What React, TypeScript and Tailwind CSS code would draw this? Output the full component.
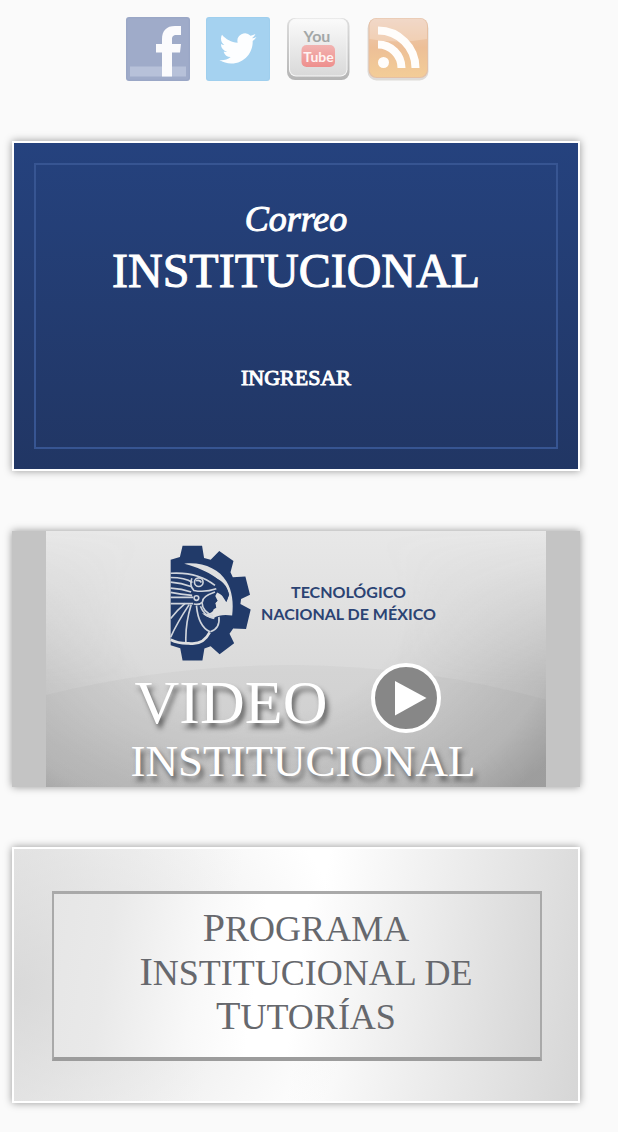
import React from "react";

function FacebookIcon() {
  return (
    <svg viewBox="0 0 64 64" className="size-16" aria-hidden="true">
      <rect width="64" height="64" rx="3" fill="#9aa7c6" />
      <rect x="1.5" y="1.5" width="61" height="61" rx="2" fill="#9fabc9" />
      <rect x="4" y="49.500" width="56" height="10" fill="#b7c1d9" />
      <path
        d="M36 59.500V35.500h-6v-8.500h6v-4.500c0-9 4.500-13.500 13-13.500h6v9h-4.500c-3.500 0-4.500 1.500-4.500 4.500v4.500h9l-1 8.500h-8v24z"
        fill="#fbfbfd"
      />
    </svg>
  );
}

function TwitterIcon() {
  return (
    <svg viewBox="0 0 64 64" className="size-16" aria-hidden="true">
      <rect width="64" height="64" rx="3" fill="#9fcfee" />
      <rect x="1" y="1" width="62" height="62" rx="3" fill="#a5d2f0" />
      <g transform="translate(13.500 13) scale(1.540)">
        <path
          fill="#fdfeff"
          d="M23.953 4.570a10 10 0 01-2.825.775 4.958 4.958 0 002.163-2.723c-.951.555-2.005.959-3.127 1.184a4.920 4.920 0 00-8.384 4.482C7.690 8.095 4.067 6.130 1.640 3.162a4.822 4.822 0 00-.666 2.475c0 1.710.870 3.213 2.188 4.096a4.904 4.904 0 01-2.228-.616v.060a4.923 4.923 0 003.946 4.827 4.996 4.996 0 01-2.212.085 4.936 4.936 0 004.604 3.417 9.867 9.867 0 01-6.102 2.105c-.390 0-.779-.023-1.170-.067a13.995 13.995 0 007.557 2.209c9.053 0 13.998-7.496 13.998-13.985 0-.210 0-.420-.015-.630A9.935 9.935 0 0024 4.590z"
        />
      </g>
    </svg>
  );
}

function YoutubeIcon() {
  return (
    <svg viewBox="0 0 64 64" className="size-16" aria-hidden="true">
      <defs>
        <linearGradient id="yt-face" x1="0" y1="0" x2="0" y2="1">
          <stop offset="0" stopColor="#fafafa" />
          <stop offset="1" stopColor="#d9d9d9" />
        </linearGradient>
        <linearGradient id="yt-edge" x1="0" y1="0" x2="0" y2="1">
          <stop offset="0" stopColor="#dedede" />
          <stop offset="1" stopColor="#b5b5b5" />
        </linearGradient>
        <linearGradient id="yt-red" x1="0" y1="0" x2="0" y2="1">
          <stop offset="0" stopColor="#f2b3b1" />
          <stop offset="1" stopColor="#ee8f8d" />
        </linearGradient>
      </defs>
      <rect x="1" y="1" width="62.500" height="62" rx="8" fill="url(#yt-edge)" />
      <rect x="3" y="1.500" width="58.500" height="58" rx="7" fill="#f7f7f7" />
      <rect x="4" y="2.500" width="56.500" height="56" rx="6" fill="url(#yt-face)" />
      <rect x="15.500" y="28" width="33.500" height="22" rx="5" fill="url(#yt-red)" />
      <text
        x="31"
        y="25"
        textAnchor="middle"
        fontSize="16"
        fontWeight="700"
        fontFamily="Lato, sans-serif"
        fill="#a3a7a7"
      >
        You
      </text>
      <text
        x="32.500"
        y="44.500"
        textAnchor="middle"
        fontSize="14"
        fontWeight="700"
        fontFamily="Lato, sans-serif"
        fill="#fff3f2"
      >
        Tube
      </text>
    </svg>
  );
}

function RssIcon() {
  return (
    <svg viewBox="0 0 64 64" className="size-16" aria-hidden="true">
      <defs>
        <linearGradient id="rss-face" x1="0" y1="0" x2="0" y2="1">
          <stop offset="0" stopColor="#edcdb9" />
          <stop offset="0.500" stopColor="#edbf97" />
          <stop offset="1" stopColor="#f3cd97" />
        </linearGradient>
      </defs>
      <rect x="1.500" y="2.500" width="61" height="61" rx="9" fill="#dedbd8" />
      <rect x="2.500" y="1" width="59.500" height="60" rx="8" fill="#e5c0a4" />
      <rect x="3.500" y="1.500" width="57.500" height="58.500" rx="7.500" fill="url(#rss-face)" />
      <path d="M3.500 22V9Q3.500 1.500 11 1.500H53.500Q61 1.500 61 9V22Q32 27 3.500 22Z" fill="#fff" opacity="0.220" />
      <circle cx="17.500" cy="45.500" r="5.500" fill="#fffdfb" />
      <path
        d="M12 27.500A23.500 23.500 0 0 1 35.500 51M12 13.500A37.500 37.500 0 0 1 49.500 51"
        fill="none"
        stroke="#fffdfb"
        strokeWidth="8"
      />
    </svg>
  );
}

function TecnmLogo() {
  return (
    <svg viewBox="60 28 245 350" className="h-[116px] w-[81px] shrink-0" aria-hidden="true">
      <path
        fill="#213a69"
        d="M62 72 90 64 98 30H157L163 67 183 72 209 46 252 76 243 110 250 125 288 123 302 178 275 191 273 206 304 223 290 282 251 280 240 296 254 325 210 358 183 334 164 341 158 377H98L91 340 62 331Z"
      />
      <path
        fill="#dedfe0"
        d="M103 84C160 78 208 100 231 138C248 164 253 205 248 241C228 238 208 238 190 250C178 248 164 242 157 234C176 238 190 232 192 222L200 217 197 203 204 196 197 182 204 168 214 172 220 184 230 200 239 178C232 142 180 104 103 84Z"
      />
      <path fill="#213a69" d="M184 122Q232 136 238 178L231 200Q226 182 200 170L190 150Z" />
      <path
        fill="#213a69"
        d="M172 184 183 188 186 179 194 176 195 188 203 196 196 204 199 215 190 219 189 228Q166 226 160 210 158 194 172 184Z"
      />
      <g fill="none" stroke="#cfd4dc" strokeWidth="5">
        <path d="M62 113Q145 108 196 150M62 126Q105 126 128 141M62 140Q94 142 126 154M62 158Q96 160 124 170M62 171Q92 177 127 180M62 186H130M62 205H130" />
        <path d="M126 128Q118 150 132 165Q165 172 200 160" />
        <circle cx="147" cy="140" r="13" />
        <path d="M139 136Q149 132 155 141" />
        <circle cx="140" cy="188" r="7" />
        <path d="M132 206Q150 210 158 200Q156 184 196 170" />
        <path d="M157 202Q158 228 190 241M62 250Q84 222 106 204M62 306Q82 262 118 208M108 322Q106 266 124 208M140 211Q146 275 181 290M152 213Q164 244 194 250" />
        <path d="M208 245Q212 280 182 290" />
      </g>
      <path
        d="M62 314Q86 326 116 325Q160 332 180 292"
        fill="none"
        stroke="#dedfe0"
        strokeWidth="8"
      />
    </svg>
  );
}

function PlayIcon() {
  return (
    <svg viewBox="0 0 70 70" className="size-[70px] shrink-0" aria-hidden="true">
      <circle cx="35" cy="35" r="33" fill="#878787" stroke="#fff" strokeWidth="4" />
      <path d="M24 18 55.500 35 24 52.500Z" fill="#fff" />
    </svg>
  );
}

function VideoBackdrop() {
  return (
    <svg
      viewBox="0 0 500 256"
      preserveAspectRatio="none"
      className="absolute inset-0 size-full"
      aria-hidden="true"
    >
      <defs>
        <linearGradient id="sky" x1="0" y1="0" x2="0" y2="1">
          <stop offset="0" stopColor="#e8e8e8" />
          <stop offset="0.550" stopColor="#dadada" />
          <stop offset="1" stopColor="#d2d2d2" />
        </linearGradient>
        <radialGradient id="shade" gradientUnits="userSpaceOnUse" cx="0" cy="0" r="1" gradientTransform="translate(215 80) scale(350 260)">
          <stop offset="0.400" stopColor="#777" stopOpacity="0" />
          <stop offset="0.850" stopColor="#777" stopOpacity="0.300" />
          <stop offset="1" stopColor="#777" stopOpacity="0.550" />
        </radialGradient>
        <linearGradient id="fade" x1="0" y1="0" x2="0" y2="1">
          <stop offset="0" stopColor="#000" />
          <stop offset="0.150" stopColor="#333" />
          <stop offset="0.600" stopColor="#fff" />
        </linearGradient>
        <mask id="lower">
          <rect width="500" height="256" fill="url(#fade)" />
        </mask>
      </defs>
      <rect width="500" height="256" fill="url(#sky)" />
      <rect width="500" height="256" fill="url(#shade)" mask="url(#lower)" />
      <path d="M0 164Q120 134 250 134Q385 136 500 169V256H0Z" fill="#707070" opacity="0.060" />
    </svg>
  );
}

const socialLinks = [
  { label: "Facebook", Icon: FacebookIcon },
  { label: "Twitter", Icon: TwitterIcon },
  { label: "YouTube", Icon: YoutubeIcon },
  { label: "RSS", Icon: RssIcon },
];

const tutoringLines = ["Programa", "Institucional de", "Tutorías"];

const cardShadow = "shadow-[0_0_8px_rgba(0,0,0,0.4)]";

function MailCard() {
  return (
    <a
      href="#correo"
      className={`block border-2 border-white bg-linear-to-b from-[#25427e] to-[#213664] p-5 ${cardShadow}`}
    >
      <div className="flex flex-col items-center border-2 border-[#375592] pt-8 pb-[55px] text-center font-['Liberation_Serif',serif] text-white [-webkit-text-stroke:1px_white]">
        <span className="text-[36px] leading-[44px] italic">Correo</span>
        <span className="text-[48px] leading-[60px]">INSTITUCIONAL</span>
        <span className="mt-[63px] text-[22px] leading-7">INGRESAR</span>
      </div>
    </a>
  );
}

function VideoCard() {
  return (
    <a href="#video" className={`block bg-[#c4c4c4] px-[34px] ${cardShadow}`}>
      <div className="relative">
        <VideoBackdrop />
        <div className="relative flex flex-col items-center pt-3.5 pb-0.5">
          <div className="flex items-center gap-2.5 pl-3.5">
            <TecnmLogo />
            <p className="text-center font-['Lato',sans-serif] text-[16px] leading-[22px] font-bold text-[#2b4373]">
              TECNOLÓGICO
              <br />
              NACIONAL DE MÉXICO
            </p>
          </div>
          <div className="mt-0.5 flex items-start gap-11 pr-4">
            <span className="pt-1 font-['Liberation_Serif',serif] text-[62px] leading-[70px] text-white [text-shadow:3px_5px_5px_rgba(70,70,70,0.8)]">
              VIDEO
            </span>
            <PlayIcon />
          </div>
          <span className="pl-3.5 font-['Liberation_Serif',serif] text-[45px] leading-[48px] text-white [text-shadow:3px_5px_5px_rgba(70,70,70,0.8)]">
            INSTITUCIONAL
          </span>
        </div>
      </div>
    </a>
  );
}

function TutoringCard() {
  return (
    <a
      href="#tutorias"
      className={`block border-2 border-white bg-[radial-gradient(ellipse_60%_110%_at_0%_55%,rgba(210,210,210,0.75)_0%,transparent_100%),linear-gradient(100deg,#ececec_0%,#f4f4f4_15%,#ffffff_38%,#ffffff_52%,#ececec_74%,#d6d6d6_100%)] pt-[42px] pr-9 pb-10 pl-[38px] ${cardShadow}`}
    >
      <div className="border-2 border-t-3 border-b-4 border-[#a9a9a9] border-b-[#9c9c9c] bg-[linear-gradient(98deg,#e6e6e6_0%,#e9e9e9_12%,#f8f8f8_30%,#ffffff_42%,#ffffff_50%,#ebebeb_75%,#d6d6d6_100%)] pt-[13px] pb-[18px] pl-[18px] text-center font-['Liberation_Serif',serif] text-[36px] leading-[44px] text-[#66686d] uppercase">
        {tutoringLines.map((line) => (
          <div key={line} className="first-letter:text-[40px] first-letter:leading-[40px]">
            {line}
          </div>
        ))}
      </div>
    </a>
  );
}

export default function App() {
  return (
    <div className="min-h-screen bg-[#fafafa] pt-[17px] pr-[38px] pb-[29px] pl-3">
      <nav aria-label="Redes sociales" className="flex justify-center gap-4 pr-9">
        {socialLinks.map(({ label, Icon }) => (
          <a key={label} href={`#${label.toLowerCase()}`} aria-label={label}>
            <Icon />
          </a>
        ))}
      </nav>
      <main className="mt-[60px] flex flex-col gap-[60px]">
        <MailCard />
        <VideoCard />
        <TutoringCard />
      </main>
    </div>
  );
}
